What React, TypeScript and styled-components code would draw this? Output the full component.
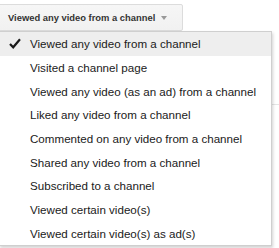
import React, { FC, useState } from 'react'
import styled, { createGlobalStyle } from 'styled-components'

const GlobalStyle = createGlobalStyle`
  body {
    margin: 0;
    background: #fff;
    font-family: "Liberation Sans", Arial, sans-serif;
    overflow: hidden;
  }
`

const options = [
  'Viewed any video from a channel',
  'Visited a channel page',
  'Viewed any video (as an ad) from a channel',
  'Liked any video from a channel',
  'Commented on any video from a channel',
  'Shared any video from a channel',
  'Subscribed to a channel',
  'Viewed certain video(s)',
  'Viewed certain video(s) as ad(s)',
]

const Page = styled.div`
  position: relative;
  padding-top: 4px;
  height: 248px;
  box-sizing: border-box;
`

const BackdropLine = styled.div`
  position: absolute;
  top: 104px;
  right: 0;
  width: 12px;
  height: 1px;
  background: #e5e5e5;
`

const Trigger = styled.button`
  display: flex;
  align-items: center;
  gap: 6px;
  height: 27px;
  margin-left: -2px;
  padding: 0 15px 0 9px;
  border: 1px solid #dcdcdc;
  border-radius: 2px;
  background: linear-gradient(#f6f6f6, #f1f1f1);
  color: #333;
  font-family: inherit;
  font-size: 9.4px;
  font-weight: bold;
  cursor: default;
`

const Arrow = styled.span`
  width: 0;
  height: 0;
  border-left: 3.5px solid transparent;
  border-right: 3.5px solid transparent;
  border-top: 4px solid #999;
  margin-top: 1px;
`

const Menu = styled.ul`
  position: relative;
  z-index: 1;
  list-style: none;
  margin: 0 0 0 -1px;
  padding: 0;
  width: 273px;
  box-sizing: border-box;
  border: 1px solid #cfcfcf;
  background: #fff;
  box-shadow: 1px 2px 3px rgba(0, 0, 0, 0.18);
`

const Item = styled.li<{ $selected: boolean }>`
  display: flex;
  align-items: center;
  height: 23.7px;
  padding-left: 9px;
  background: ${p => (p.$selected ? '#eeeeee' : 'transparent')};
  color: #1a1a1a;
  font-size: 11.6px;
  white-space: nowrap;
`

const Check = styled.span`
  display: flex;
  flex-shrink: 0;
  width: 21px;
`

const CheckMark: FC = () => (
  <svg width="12" height="11" viewBox="0 0 12 11">
    <path d="M1 6 L4.2 9.3 L11 1.2" fill="none" stroke="#1a1a1a" strokeWidth="2.2" />
  </svg>
)

export default function App() {
  const [selected, setSelected] = useState(0)

  return (
    <Page>
      <GlobalStyle />
      <BackdropLine />
      <Trigger>
        {options[selected]}
        <Arrow />
      </Trigger>
      <Menu>
        {options.map((label, i) => (
          <Item key={label} $selected={i === selected} onClick={() => setSelected(i)}>
            <Check>{i === selected && <CheckMark />}</Check>
            {label}
          </Item>
        ))}
      </Menu>
    </Page>
  )
}
